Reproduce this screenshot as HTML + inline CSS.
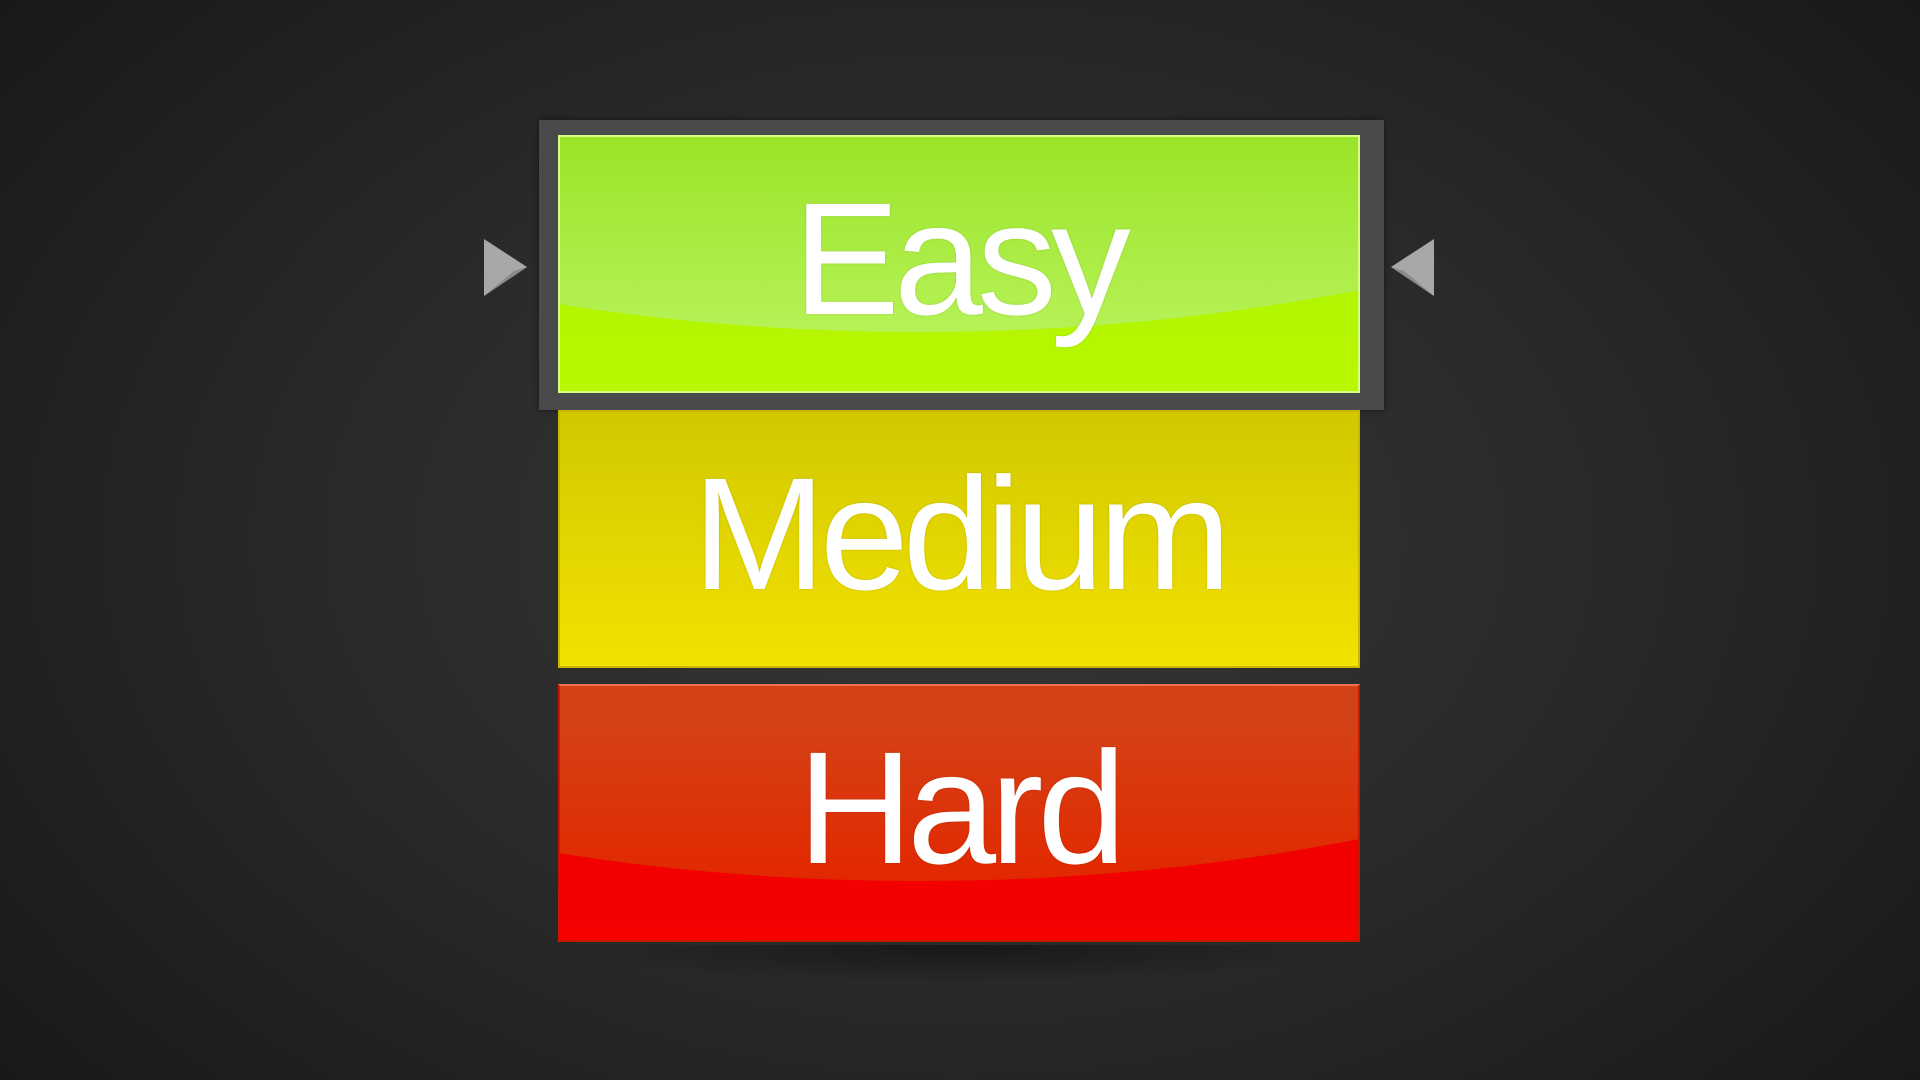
<!DOCTYPE html>
<html><head><meta charset="utf-8"><style>
html,body{margin:0;padding:0}
body{width:1920px;height:1080px;overflow:hidden;position:relative;
background:radial-gradient(ellipse 70% 85% at 50% 50%,#363636 0%,#2a2a2a 45%,#161616 100%);
font-family:"Liberation Sans",sans-serif}
.frame{position:absolute;left:539px;top:120px;width:845px;height:290px;background:#4a4a4a;box-shadow:0 0 6px rgba(0,0,0,.5)}
.btn{position:absolute;left:558px;width:802px;height:258px;overflow:hidden;box-sizing:border-box;color:#fff}
.btn .g{position:absolute;left:-105%;width:300%;top:-1005px;height:1200px;border-radius:50%}
.btn span{position:absolute;left:0;right:0;top:42px;text-align:center;font-size:160px;line-height:160px;letter-spacing:-6px;text-shadow:0 0 2px rgba(0,0,0,.15)}
.easy{top:135px;background:linear-gradient(#aaf000,#b8f800);border:2px solid #d8ff80}
.easy .g{background:linear-gradient(#9be42a 84%,#b6f256 100%)}
.med{top:410px;background:linear-gradient(#d2c800,#f2e200);border:2px solid #c8b800}
.hard{top:684px;background:linear-gradient(#e80000,#f60000);border:2px solid #c41800;border-top-color:#f07050}
.hard .g{background:linear-gradient(#d44318 86%,#e22800 100%)}
.shadow{position:absolute;left:560px;top:945px;width:800px;height:40px;background:radial-gradient(ellipse at 50% 0%,rgba(0,0,0,.45),rgba(0,0,0,0) 70%)}
svg{position:absolute}
</style></head><body>
<div class="shadow"></div>
<div class="frame"></div>
<div class="btn easy"><div class="g"></div><span>Easy</span></div>
<div class="btn med"><span>Medium</span></div>
<div class="btn hard"><div class="g"></div><span>Hard</span></div>
<svg style="left:484px;top:239px" width="44" height="58"><polygon points="0,0 43,28 0,57" fill="#a8a8a8"/><polygon points="0,57 43,28 30,32" fill="#8a8a8a"/></svg>
<svg style="left:1391px;top:239px" width="44" height="58"><polygon points="43,0 0,28 43,57" fill="#a8a8a8"/><polygon points="43,57 0,28 13,32" fill="#8a8a8a"/></svg>
</body></html>
